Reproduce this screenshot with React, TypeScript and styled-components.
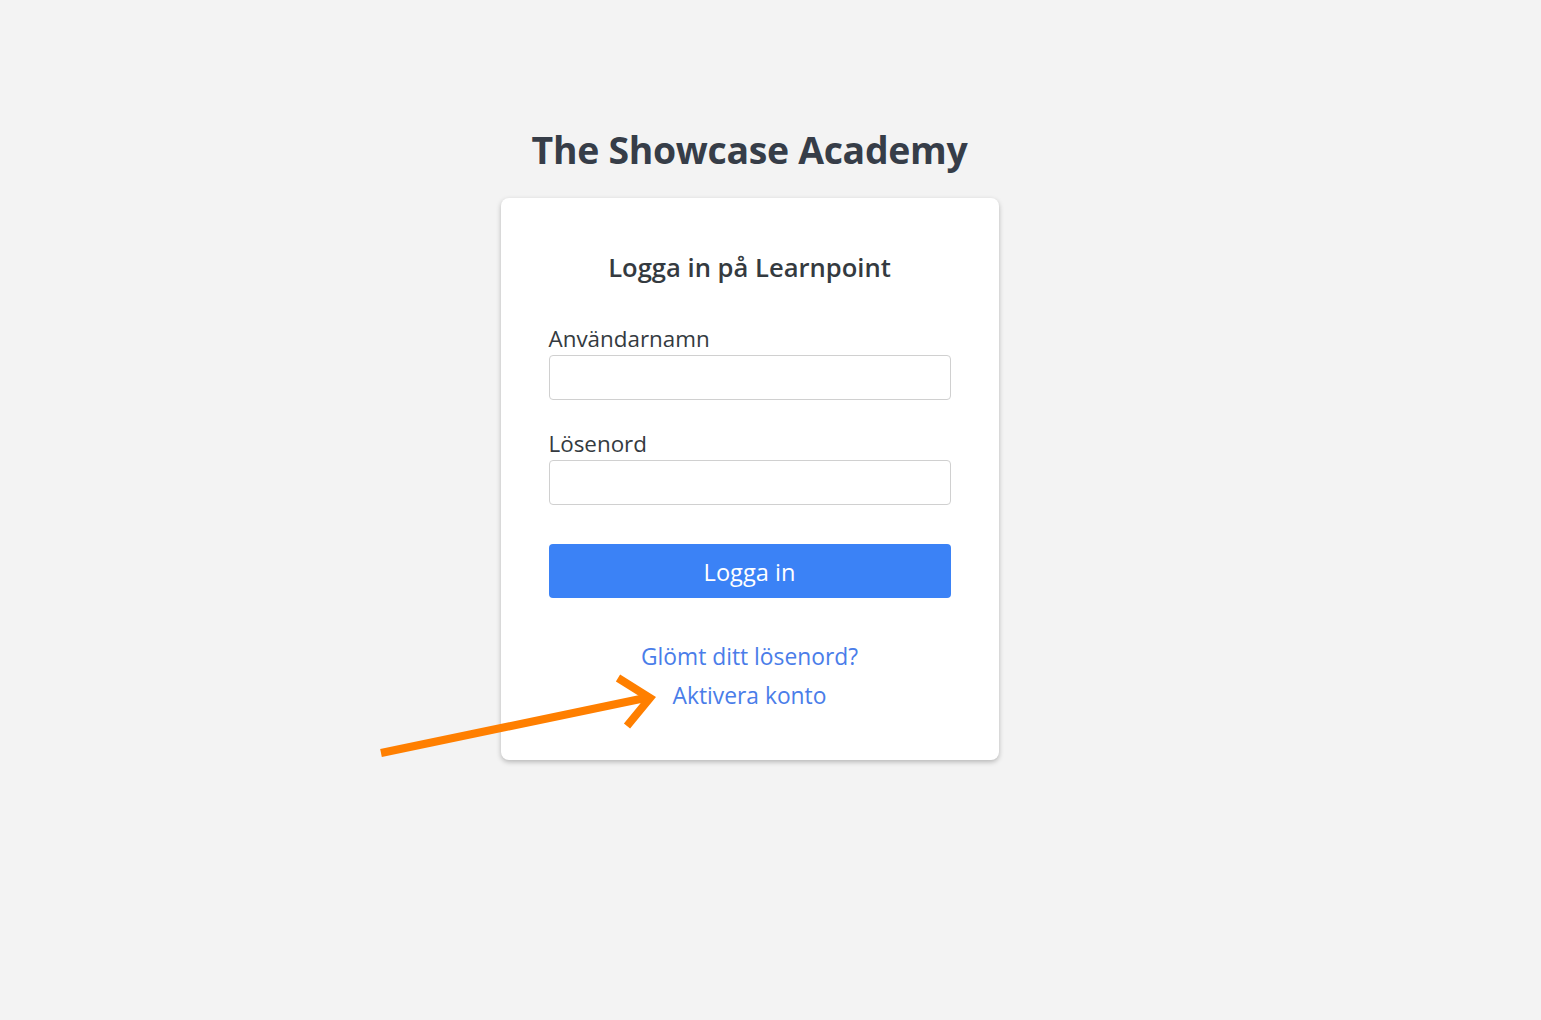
import React from "react";
import styled, { createGlobalStyle } from "styled-components";

const GlobalStyle = createGlobalStyle`
  html, body { margin: 0; padding: 0; background: #f3f3f3; }
  body { font-family: "Open Sans", "Noto Sans", sans-serif; color: #343a40; }
  * { box-sizing: border-box; }
`;

const Page = styled.div`
  width: 1499px; min-height: 1020px; display: flex; flex-direction: column; align-items: center;
  padding-top: 124px;
`;

const Title = styled.h1`
  margin: 0 0 22px; font-size: 37.4px; line-height: 52px; font-weight: 700; color: #363d48;
  letter-spacing: -0.3px;
`;

const CardWrap = styled.div`
  position: relative;
`;

const Card = styled.div`
  width: 498px; background: #fff; border-radius: 8px;
  box-shadow: 0 2px 5px rgba(0,0,0,0.25);
  padding: 52px 48px 49px;
`;

const Heading = styled.h2`
  margin: 0 0 38px; text-align: center; font-size: 25.6px; line-height: 36px; font-weight: 600; color: #343a40;
`;

const Field = styled.div`
  display: flex; flex-direction: column;
  & + & { margin-top: 29px; }
`;

const Label = styled.label`
  font-size: 22.4px; line-height: 30px; color: #343a40; margin-bottom: 1px;
`;

const Input = styled.input`
  height: 45px; width: 100%; border: 1px solid #d0d0d0; border-radius: 4px;
  font-size: 18px; padding: 0 12px; background: #fff; outline: none;
`;

const Button = styled.button`
  margin-top: 39px; width: 100%; height: 54px; border: none; border-radius: 4px;
  background: #3b82f6; color: #fff; font-family: inherit; font-size: 23.6px; cursor: pointer;
  padding-top: 2px;
`;

const Links = styled.div`
  margin-top: 44px; display: flex; flex-direction: column; align-items: center; gap: 9px;
`;

const Link = styled.a`
  font-size: 22.8px; line-height: 30px; color: #4a7de9; text-decoration: none; cursor: pointer;
`;

const Arrow = styled.svg`
  position: absolute; left: -131px; top: 470px; pointer-events: none; overflow: visible;
`;

export default function App() {
  return (
    <>
      <GlobalStyle />
      <Page>
        <Title>The Showcase Academy</Title>
        <CardWrap>
          <Card>
            <Heading>Logga in på Learnpoint</Heading>
            <Field>
              <Label htmlFor="user">Användarnamn</Label>
              <Input id="user" type="text" />
            </Field>
            <Field>
              <Label htmlFor="pass">Lösenord</Label>
              <Input id="pass" type="password" />
            </Field>
            <Button>Logga in</Button>
            <Links>
              <Link>Glömt ditt lösenord?</Link>
              <Link>Aktivera konto</Link>
            </Links>
          </Card>
          {/* annotation arrow pointing at "Aktivera konto" */}
          <Arrow width="300" height="100" viewBox="0 0 300 100">
            <g stroke="#ff7f00" strokeWidth="8" fill="none" strokeLinecap="butt">
              <line x1="11" y1="85" x2="280" y2="29" />
              <polyline points="248,10 280,30 257,58" />
            </g>
          </Arrow>
        </CardWrap>
      </Page>
    </>
  );
}
